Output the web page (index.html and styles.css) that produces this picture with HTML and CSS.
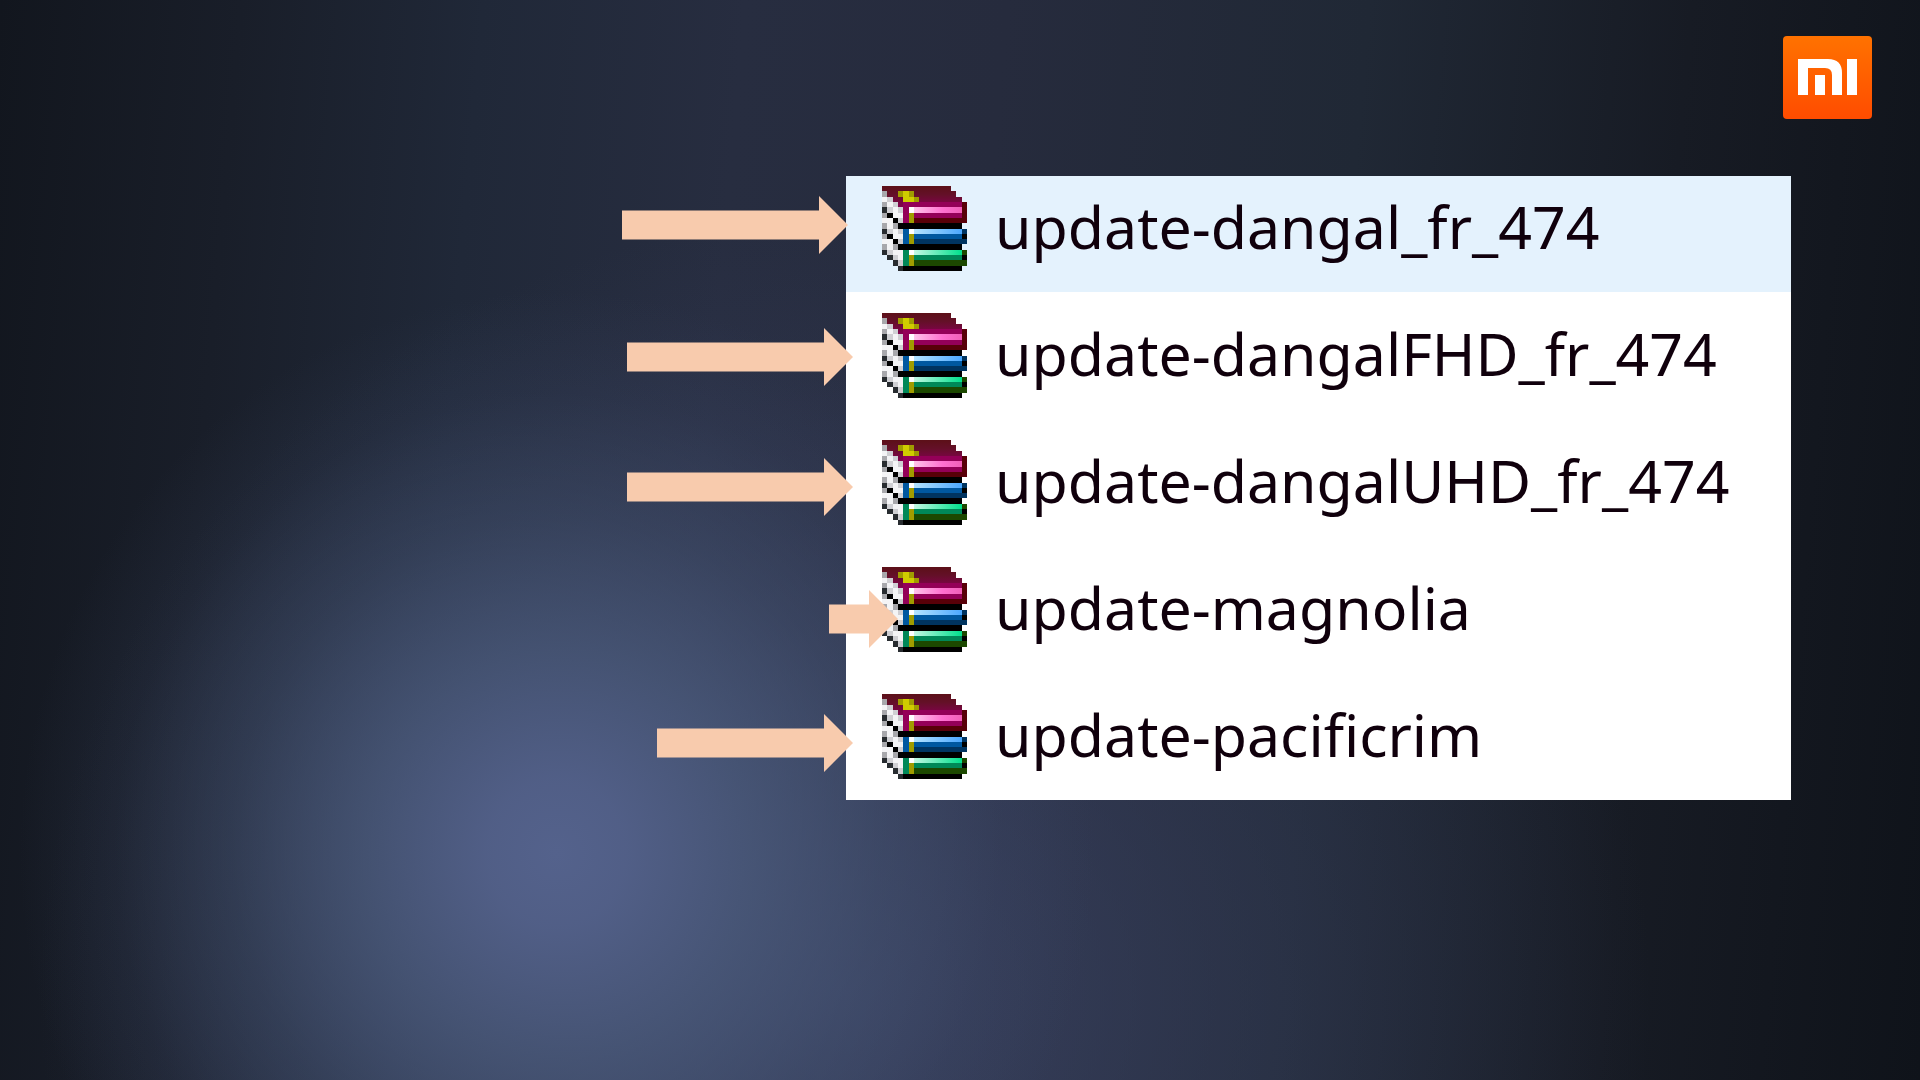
FILE: index.html
```
<!DOCTYPE html>
<html lang="en">
<head>
<meta charset="utf-8">
<title>Update files</title>
<link rel="stylesheet" href="styles.css">
</head>
<body>
<svg class="sprite" aria-hidden="true">
  <defs>
    <linearGradient id="cover" x1="0" y1="0" x2="0" y2="1"><stop offset="0" stop-color="#5c1018"/><stop offset=".4" stop-color="#641028"/><stop offset="1" stop-color="#840050"/></linearGradient>
    <linearGradient id="pink"><stop offset="0" stop-color="#ffc4ea"/><stop offset=".6" stop-color="#ff70d0"/><stop offset="1" stop-color="#f060b8"/></linearGradient>
    <linearGradient id="blue"><stop offset="0" stop-color="#b4e4ff"/><stop offset="1" stop-color="#4ca8ff"/></linearGradient>
    <linearGradient id="green"><stop offset="0" stop-color="#c4f8e4"/><stop offset="1" stop-color="#00e08c"/></linearGradient>
    <symbol id="books" viewBox="0 0 16 16">
      <path fill="#f4f4f6" d="M0 1h1v1h1v1h1v1h1v11H3v-1H2v-1H1v-1H0z"/>
      <path fill="url(#cover)" d="M0 0h13v1h1v1h1v2H3V3H2V2H1V1H0z"/>
      <path fill="#a8a8ac" d="M0 1h1v1H0zM0 3h1v1H0zM0 5h1v1H0zM0 7h1v1H0zM2 7h1v1H2zM0 9h1v1H0zM0 11h1v1H0zM2 11h1v1H2z"/>
      <path fill="#cfcfd3" d="M1 2h1v1H1zM2 3h1v1H2zM1 4h1v1H1zM3 4h1v1H3zM3 6h1v1H3zM1 8h1v1H1zM3 8h1v1H3zM3 10h1v1H3zM1 12h1v1H1zM2 13h1v1H2zM3 14h1v1H3z"/>
      <path fill="#282c30" d="M0 4h1v1H0zM0 8h1v1H0zM0 12h1v1H0zM1 13h1v1H1zM2 14h1v1H2zM3 15h1v1H3z"/>
      <path fill="#000" d="M1 5h1v1H1zM2 6h1v1H2zM3 7h12v1H3zM1 9h1v1H1zM2 10h1v1H2zM3 11h12v1H3zM4 15h11v1H4zM15 9h1v1h-1zM15 13h1v1h-1z"/>
      <path fill="#940058" d="M4 3h11v3H4zM4 6h1v1H4z"/>
      <path fill="#580008" d="M15 3h1v4H5V6h10z"/>
      <path fill="url(#pink)" d="M6 4h9v1H6z"/>
      <path fill="#0058a0" d="M4 8h11v2H4zM4 10h1v1H4z"/>
      <path fill="#003460" d="M5 10h11v1H5zM15 8h1v1h-1z"/>
      <path fill="url(#blue)" d="M6 8h9v1H6z"/>
      <path fill="#008858" d="M4 12h11v2H4zM4 14h1v1H4z"/>
      <path fill="#1c4800" d="M5 14h11v1H5zM15 12h1v1h-1z"/>
      <path fill="url(#green)" d="M6 12h9v1H6z"/>
      <path fill="#fff" d="M5 4h1v1H5zM5 8h1v1H5zM5 12h1v1H5z"/>
      <path fill="#a09c00" d="M3 1h1v1H3zM5 1h1v1H5zM6 2h1v1H6zM5 5h1v2H5zM5 9h1v2H5zM5 13h1v2H5z"/>
      <path fill="#d0cc00" d="M4 1h1v1H4zM4 2h2v1H4z"/>
    </symbol>
  </defs>
</svg>
<header class="top">
  <svg class="logo" viewBox="0 0 89 83" role="img" aria-label="Mi">
    <defs><linearGradient id="orange" x1="0" y1="0" x2="0" y2="1"><stop offset="0" stop-color="#ff7200"/><stop offset="1" stop-color="#ff4c00"/></linearGradient></defs>
    <rect width="89" height="83" rx="4" fill="url(#orange)"/>
    <path fill="#fff" d="M15 23H45Q59 23 59 37V59H49V39Q49 32 42 32H25V59H15zM32 39H42V59H32zM64 23H74V59H64z"/>
  </svg>
</header>
<main class="stage">
  <ul class="files">
    <li class="file selected"><span class="arrow arrow-1"></span><svg class="icon"><use href="#books"/></svg><span class="name">update-dangal_fr_474</span></li>
    <li class="file"><span class="arrow arrow-2"></span><svg class="icon"><use href="#books"/></svg><span class="name">update-dangalFHD_fr_474</span></li>
    <li class="file"><span class="arrow arrow-3"></span><svg class="icon"><use href="#books"/></svg><span class="name">update-dangalUHD_fr_474</span></li>
    <li class="file"><span class="arrow arrow-4"></span><svg class="icon"><use href="#books"/></svg><span class="name">update-magnolia</span></li>
    <li class="file"><span class="arrow arrow-5"></span><svg class="icon"><use href="#books"/></svg><span class="name">update-pacificrim</span></li>
  </ul>
</main>
</body>
</html>
```
FILE: styles.css
```
* {
  box-sizing: border-box;
}

body {
  margin: 0;
  min-height: 100vh;
  font-family: "Noto Sans", "Open Sans", sans-serif;
  background:
    radial-gradient(ellipse 28% 52% at 29% 79%, rgb(84, 98, 140) 0%, rgba(83, 97, 138, 0.94) 13%, rgba(76, 92, 126, 0.76) 36%, rgba(72, 88, 120, 0.42) 60%, rgba(66, 80, 112, 0.15) 82%, rgba(62, 76, 106, 0) 100%),
    radial-gradient(ellipse 42% 72% at 44% 92%, rgba(62, 72, 106, 0.75) 0%, rgba(58, 66, 98, 0.45) 45%, rgba(50, 58, 84, 0) 100%),
    linear-gradient(95deg, #12161e 0%, #191e29 12%, #202838 24%, #272d40 37%, #262b3d 50%, #202835 68%, #171b24 84%, #0f131a 100%);
}

.sprite {
  position: absolute;
  width: 0;
  height: 0;
}

.top {
  display: flex;
  justify-content: flex-end;
  padding: 36px 48px 57px;
}

.logo {
  width: 89px;
  height: 83px;
}

.stage {
  display: grid;
  grid-template-columns: 846fr 945fr 129fr;
}

.files {
  grid-column: 2;
  margin: 0;
  padding: 0;
  list-style: none;
  background: #fff;
}

.file {
  position: relative;
  display: flex;
  align-items: center;
  gap: 28px;
  padding: 21px 36px;
}

.selected {
  padding-top: 10px;
  background: #e4f2fd;
}

.icon {
  flex: none;
  width: 85px;
  height: 85px;
  shape-rendering: crispEdges;
}

.name {
  padding-bottom: 6px;
  font-size: 59px;
  line-height: 78px;
  color: #10000c;
  white-space: nowrap;
  font-variant-ligatures: none;
}

/* Pointers drawn over the list, each 58px tall with a 29px head */
.arrow {
  position: absolute;
  z-index: 1;
  width: 226px;
  height: 58px;
  background: #f8cbad;
  clip-path: polygon(0 25%, calc(100% - 29px) 25%, calc(100% - 29px) 0, 100% 50%, calc(100% - 29px) 100%, calc(100% - 29px) 75%, 0 75%);
}

.arrow-1 {
  left: -224px;
  top: 20px;
}

.arrow-2 {
  left: -219px;
  top: 36px;
}

.arrow-3 {
  left: -219px;
  top: 39px;
}

.arrow-4 {
  left: -17px;
  top: 44px;
  width: 69px;
}

.arrow-5 {
  left: -189px;
  top: 41px;
  width: 196px;
}
```
